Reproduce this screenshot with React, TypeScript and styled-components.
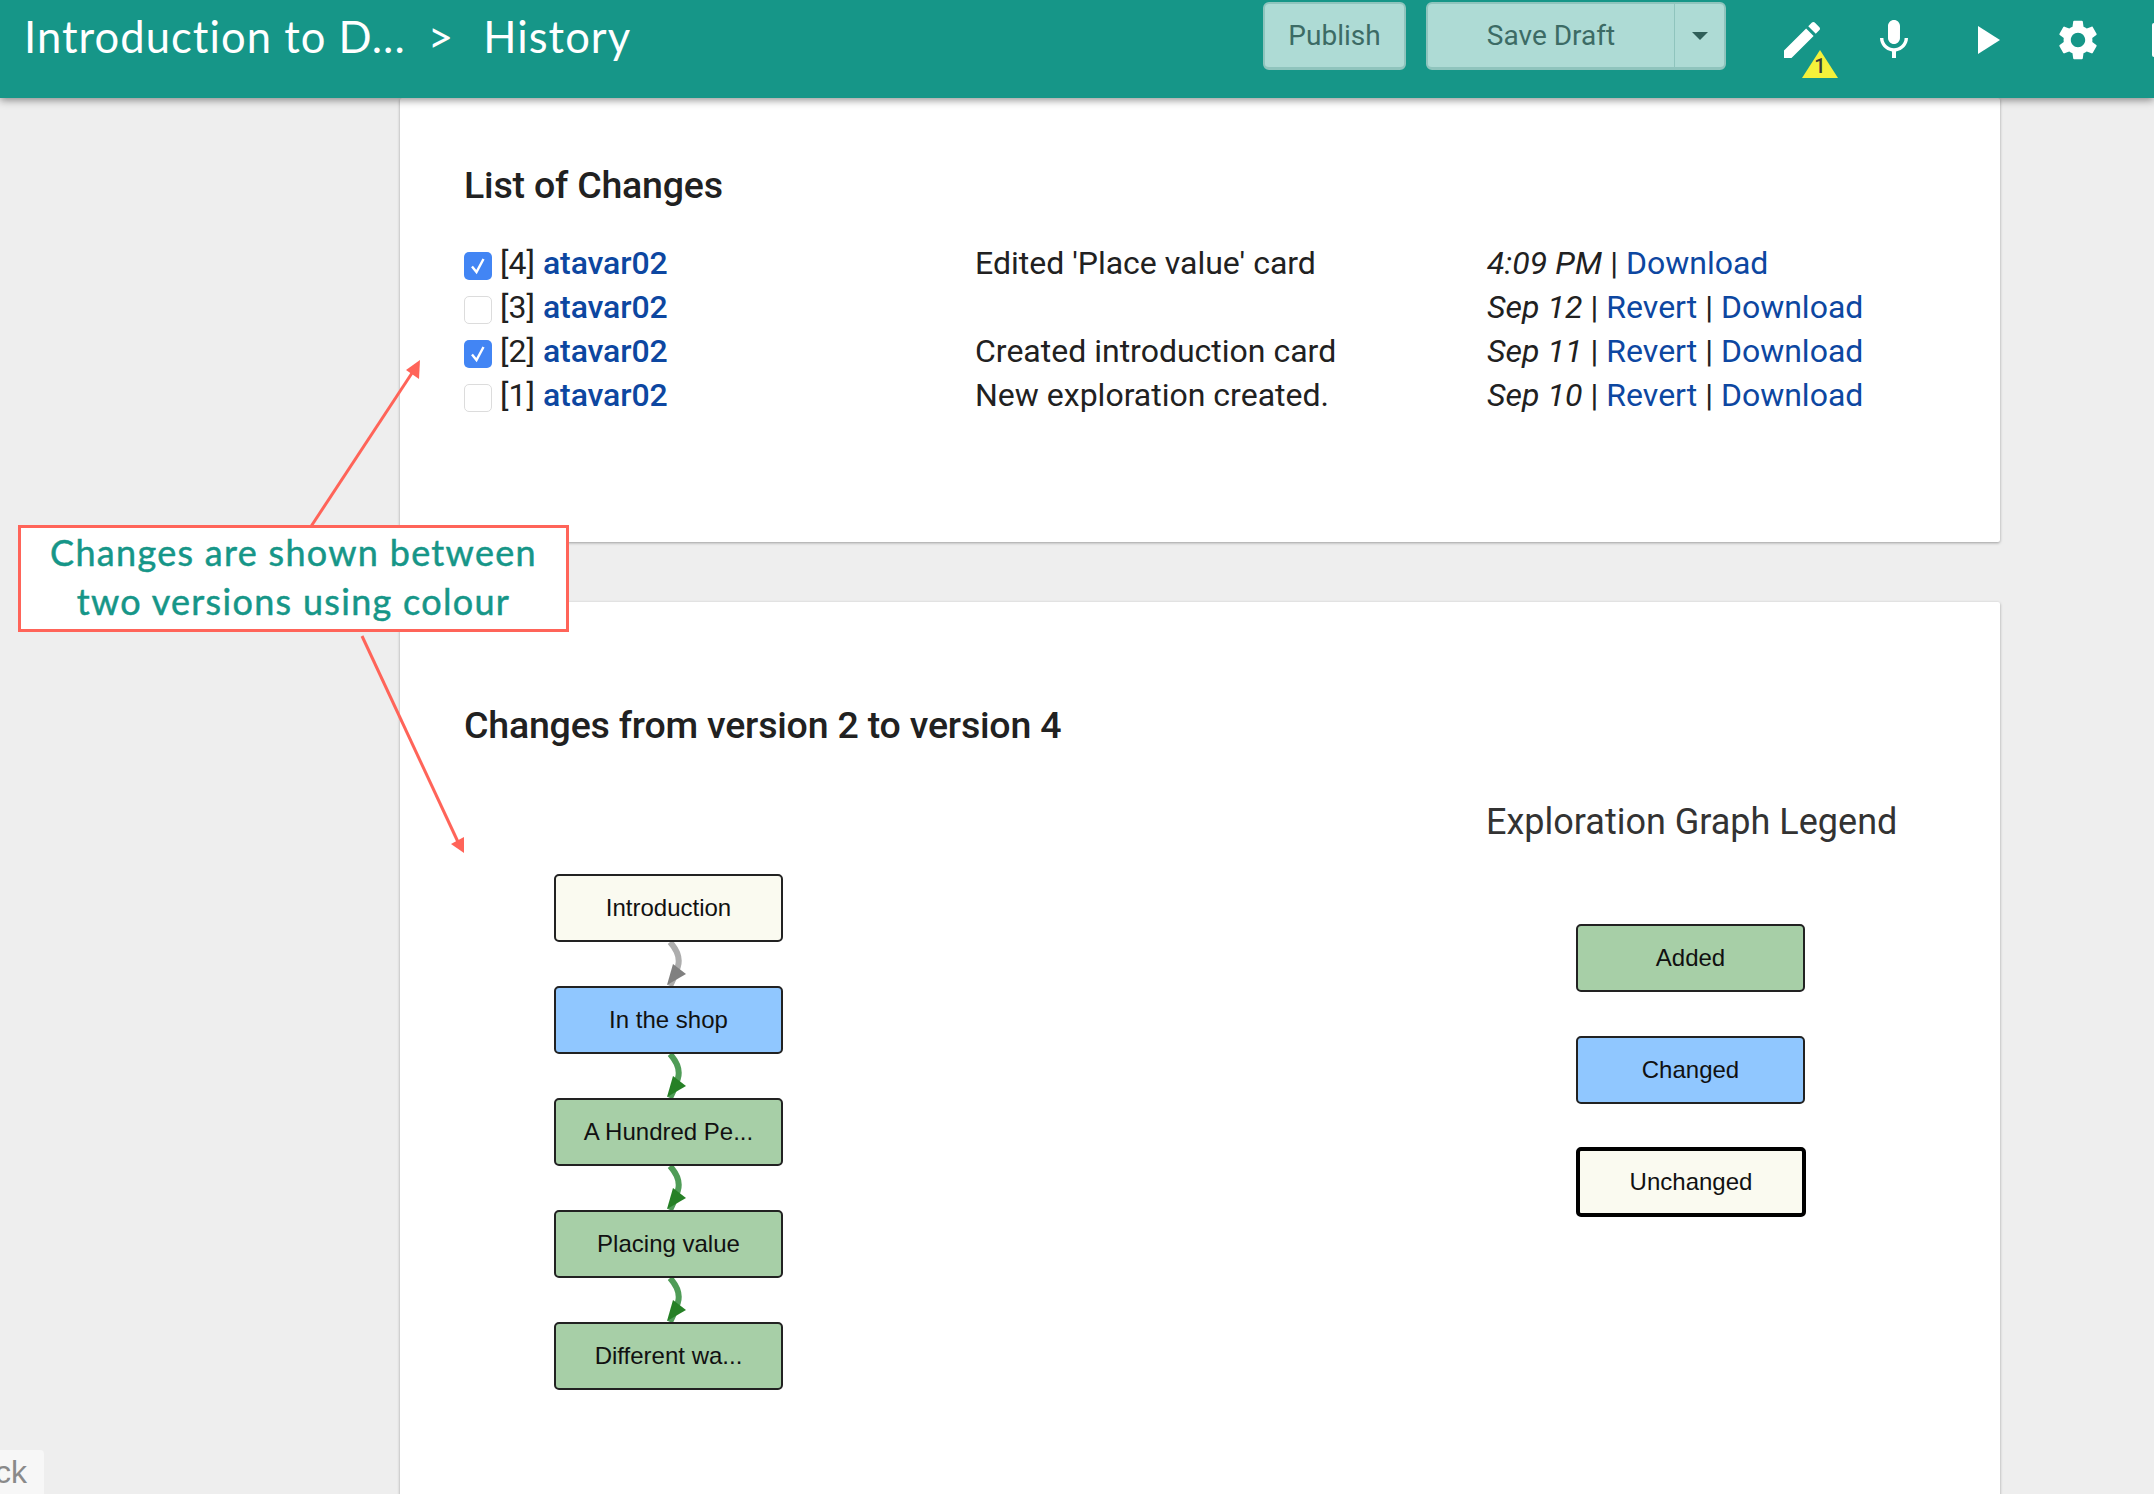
import React from "react";
import styled, { createGlobalStyle } from "styled-components";

const Global = createGlobalStyle`
  html, body { margin: 0; padding: 0; background: #eeeeee; }
  body { font-family: Roboto, "Liberation Sans", sans-serif; color: #212121; }
  * { box-sizing: border-box; }
`;

const Page = styled.div`
  position: relative;
  width: 2154px;
  height: 1494px;
  overflow: hidden;
  background: #eeeeee;
`;

const NavBar = styled.header`
  position: relative;
  z-index: 2;
  display: flex;
  align-items: flex-start;
  height: 98px;
  background: #169688;
  box-shadow: 0 2px 8px rgba(0, 0, 0, 0.45);
  overflow: hidden;
`;

const Crumbs = styled.div`
  display: flex;
  align-items: center;
  height: 72px;
  padding-left: 24px;
  font-family: Lato, "Open Sans", sans-serif;
  font-size: 43.5px;
  letter-spacing: 1.05px;
  color: #ffffff;
  white-space: pre;
`;

const CrumbSep = styled.span`
  margin: 0 29px 0 22px;
  font-size: 44px;
`;

const NavRight = styled.div`
  display: flex;
  align-items: flex-start;
  margin-left: auto;
  margin-right: -40px;
`;

const NavButton = styled.div`
  display: flex;
  align-items: center;
  justify-content: center;
  height: 68px;
  margin-top: 2px;
  background: #aedbd5;
  border: 2px solid #8fc4bd;
  border-bottom-width: 3px;
  border-radius: 6px;
  font-size: 28px;
  color: #3c6b65;
`;

const PublishButton = styled(NavButton)`
  width: 143px;
  margin-right: 20px;
`;

const SaveButton = styled(NavButton)`
  width: 300px;
  margin-right: 52px;
  justify-content: flex-start;
`;

const SaveLabel = styled.span`
  flex: 1;
  text-align: center;
`;

const Caret = styled.span`
  display: flex;
  align-items: center;
  justify-content: center;
  width: 50px;
  height: 100%;
  border-left: 1px solid #8fc4bd;

  &::after {
    content: "";
    border-left: 8px solid transparent;
    border-right: 8px solid transparent;
    border-top: 8px solid #2f5f59;
  }
`;

const IconRow = styled.div`
  display: flex;
  gap: 44px;
  padding-top: 16px;
`;

const IconSlot = styled.div`
  position: relative;
  width: 48px;
  height: 48px;
  color: #ffffff;

  svg { display: block; }
`;

const WarningBadge = styled.div`
  position: absolute;
  left: 24px;
  top: 34px;
  width: 36px;
  height: 28px;
  display: flex;
  align-items: flex-end;
  justify-content: center;
  clip-path: polygon(50% 0, 100% 100%, 0 100%);
  background: #f4f13b;
  font-size: 20px;
  font-weight: 500;
  line-height: 24px;
  color: #3a3a3a;
`;

const Main = styled.main`
  display: flex;
  flex-direction: column;
  gap: 60px;
  width: 1600px;
  margin-left: 400px;
`;

const Card = styled.section`
  background: #ffffff;
  box-shadow: 0 1px 3px rgba(0, 0, 0, 0.35);
  border-radius: 2px;
  padding-left: 64px;
`;

const ChangesCard = styled(Card)`
  height: 444px;
  padding-top: 65px;
`;

const GraphCard = styled(Card)`
  height: 900px;
  padding-top: 101px;
`;

const Heading = styled.h2`
  margin: 0;
  font-size: 37.5px;
  font-weight: 500;
  line-height: 44px;
  letter-spacing: -0.2px;
  color: #212121;
`;

const ChangeList = styled.div`
  margin-top: 34px;
`;

const ChangeRow = styled.div`
  display: grid;
  grid-template-columns: 511px 512px 1fr;
  height: 44px;
  align-items: center;
  font-size: 32px;
  line-height: 44px;
  white-space: nowrap;
`;

const Who = styled.div`
  display: flex;
  align-items: center;
`;

const Check = styled.span<{ $on: boolean }>`
  display: flex;
  align-items: center;
  justify-content: center;
  width: 28px;
  height: 28px;
  margin: 5px 8px 0 0;
  border-radius: 5px;
  background: ${(p) => (p.$on ? "#4285f4" : "#ffffff")};
  border: ${(p) => (p.$on ? "none" : "1px solid #dcdcdc")};
`;

const UserLink = styled.a`
  margin-left: 8px;
  font-weight: 500;
  letter-spacing: -0.1px;
  color: #0d47a1;
`;

const When = styled.em`
  font-style: italic;
  letter-spacing: 0.1px;
`;

const Action = styled.a`
  color: #0d47a1;
`;

const GraphBody = styled.div`
  display: grid;
  grid-template-columns: 1022px 1fr;
`;

const GraphColumn = styled.div`
  padding: 127px 0 0 90px;
`;

const FlowNode = styled.div<{ $fill: string; $heavy?: boolean }>`
  display: flex;
  align-items: center;
  justify-content: center;
  width: ${(p) => (p.$heavy ? "230px" : "229px")};
  height: ${(p) => (p.$heavy ? "70px" : "68px")};
  margin-top: ${(p) => (p.$heavy ? "-1px" : "0")};
  background: ${(p) => p.$fill};
  border: ${(p) => (p.$heavy ? "4px" : "2px")} solid ${(p) => (p.$heavy ? "#000" : "#222")};
  border-radius: 5px;
  font-family: "Liberation Sans", Arial, sans-serif;
  font-size: 24px;
  color: #111111;
`;

const EdgeSvg = styled.svg`
  display: block;
  margin-left: 85px;
`;

const LegendColumn = styled.div`
  padding-top: 53px;
`;

const LegendTitle = styled.h3`
  margin: 0 0 80px;
  font-size: 36px;
  font-weight: 400;
  line-height: 44px;
  color: #333333;
`;

const LegendList = styled.div`
  display: flex;
  flex-direction: column;
  align-items: flex-start;
  gap: 44px;
  padding-left: 90px;
`;

const ArrowLayer = styled.svg`
  position: absolute;
  inset: 0;
  z-index: 3;
  pointer-events: none;
`;

const Callout = styled.div`
  position: absolute;
  z-index: 4;
  left: 18px;
  top: 525px;
  width: 551px;
  height: 107px;
  background: #ffffff;
  border: 3px solid #ff6459;
  font-family: Lato, "Open Sans", sans-serif;
  font-size: 36px;
  font-weight: 400;
  -webkit-text-stroke: 0.5px #169688;
  line-height: 49px;
  letter-spacing: 1.3px;
  text-align: center;
  color: #169688;
`;

const FeedbackTab = styled.div`
  position: absolute;
  z-index: 2;
  left: 0;
  bottom: 0;
  width: 44px;
  height: 44px;
  overflow: hidden;
  background: #f7f7f7;
  border-top-right-radius: 4px;
  font-family: "Liberation Sans", Arial, sans-serif;
  font-size: 32px;
  line-height: 44px;
  color: #8a8a8a;
  direction: rtl;
  padding-right: 17px;
  white-space: nowrap;
`;

const CheckMark = () => (
  <svg width="20" height="22" viewBox="0 0 20 22">
    <path d="M4 11.5 L8.5 17 L15.5 4" fill="none" stroke="#fff" strokeWidth="2.4" />
  </svg>
);

const Edge = ({ line, head }: { line: string; head: string }) => (
  <EdgeSvg width="60" height="44" viewBox="0 0 60 44">
    <path d="M31 0 C39 9 41 17 39 24 C37 32 34 38 31 44" fill="none" stroke={line} strokeWidth="6" />
    <polygon points="47,32 34,22 28,43" fill={head} />
  </EdgeSvg>
);

const changes = [
  { n: 4, on: true, note: "Edited 'Place value' card", when: "4:09 PM", revert: false },
  { n: 3, on: false, note: "", when: "Sep 12", revert: true },
  { n: 2, on: true, note: "Created introduction card", when: "Sep 11", revert: true },
  { n: 1, on: false, note: "New exploration created.", when: "Sep 10", revert: true },
];

const BEIGE = "#fafaf0";
const BLUE = "#90c7ff";
const GREEN = "#a7cfa7";
const GREY_EDGE = { line: "#adadad", head: "#808080" };
const GREEN_EDGE = { line: "#4f9c57", head: "#268026" };

export default function App() {
  return (
    <Page>
      <Global />
      <NavBar>
        <Crumbs>
          Introduction to D...
          <CrumbSep>&gt;</CrumbSep>
          History
        </Crumbs>
        <NavRight>
          <PublishButton>Publish</PublishButton>
          <SaveButton>
            <SaveLabel>Save Draft</SaveLabel>
            <Caret />
          </SaveButton>
          <IconRow>
            <IconSlot>
              <svg width="48" height="48" viewBox="0 0 24 24" fill="currentColor">
                <path d="M3 17.25V21h3.75L17.81 9.94l-3.75-3.75L3 17.25zM20.71 7.04c.39-.39.39-1.02 0-1.41l-2.34-2.34c-.39-.39-1.02-.39-1.41 0l-1.83 1.83 3.75 3.75 1.83-1.83z" />
              </svg>
              <WarningBadge>1</WarningBadge>
            </IconSlot>
            <IconSlot>
              <svg width="48" height="48" viewBox="0 0 24 24" fill="currentColor">
                <path d="M12 14c1.66 0 2.99-1.34 2.99-3L15 5c0-1.66-1.34-3-3-3S9 3.34 9 5v6c0 1.66 1.34 3 3 3zm5.3-3c0 3-2.54 5.1-5.3 5.1S6.7 14 6.7 11H5c0 3.41 2.72 6.23 6 6.72V21h2v-3.28c3.28-.48 6-3.3 6-6.72h-1.7z" />
              </svg>
            </IconSlot>
            <IconSlot>
              <svg width="48" height="48" viewBox="0 0 24 24" fill="currentColor">
                <path d="M8 5v14l11-7z" />
              </svg>
            </IconSlot>
            <IconSlot>
              <svg width="48" height="48" viewBox="0 0 24 24" fill="currentColor">
                <path d="M19.14 12.94c.04-.3.06-.61.06-.94 0-.32-.02-.64-.07-.94l2.03-1.58c.18-.14.23-.41.12-.61l-1.92-3.32c-.12-.22-.37-.29-.59-.22l-2.39.96c-.5-.38-1.03-.7-1.62-.94l-.36-2.54c-.04-.24-.24-.41-.48-.41h-3.84c-.24 0-.43.17-.47.41l-.36 2.54c-.59.24-1.13.57-1.62.94l-2.39-.96c-.22-.08-.47 0-.59.22L2.74 8.87c-.12.21-.08.47.12.61l2.03 1.58c-.05.3-.09.63-.09.94s.02.64.07.94l-2.03 1.58c-.18.14-.23.41-.12.61l1.92 3.32c.12.22.37.29.59.22l2.39-.96c.5.38 1.03.7 1.62.94l.36 2.54c.05.24.24.41.48.41h3.84c.24 0 .44-.17.47-.41l.36-2.54c.59-.24 1.13-.56 1.62-.94l2.39.96c.22.08.47 0 .59-.22l1.92-3.32c.12-.22.07-.47-.12-.61l-2.01-1.58zM12 15.6c-1.98 0-3.6-1.62-3.6-3.6s1.62-3.6 3.6-3.6 3.6 1.62 3.6 3.6-1.62 3.6-3.6 3.6z" />
              </svg>
            </IconSlot>
            <IconSlot>
              <svg width="48" height="48" viewBox="0 0 24 24" fill="currentColor">
                <rect x="3" y="3.5" width="18" height="17" rx="1" />
              </svg>
            </IconSlot>
          </IconRow>
        </NavRight>
      </NavBar>

      <Main>
        <ChangesCard>
          <Heading>List of Changes</Heading>
          <ChangeList>
            {changes.map((c) => (
              <ChangeRow key={c.n}>
                <Who>
                  <Check $on={c.on}>{c.on && <CheckMark />}</Check>[{c.n}]
                  <UserLink>atavar02</UserLink>
                </Who>
                <div>{c.note}</div>
                <div>
                  <When>{c.when}</When> |{" "}
                  {c.revert && (
                    <>
                      <Action>Revert</Action> |{" "}
                    </>
                  )}
                  <Action>Download</Action>
                </div>
              </ChangeRow>
            ))}
          </ChangeList>
        </ChangesCard>

        <GraphCard>
          <Heading>Changes from version 2 to version 4</Heading>
          <GraphBody>
            <GraphColumn>
              <FlowNode $fill={BEIGE}>Introduction</FlowNode>
              <Edge {...GREY_EDGE} />
              <FlowNode $fill={BLUE}>In the shop</FlowNode>
              <Edge {...GREEN_EDGE} />
              <FlowNode $fill={GREEN}>A Hundred Pe...</FlowNode>
              <Edge {...GREEN_EDGE} />
              <FlowNode $fill={GREEN}>Placing value</FlowNode>
              <Edge {...GREEN_EDGE} />
              <FlowNode $fill={GREEN}>Different wa...</FlowNode>
            </GraphColumn>
            <LegendColumn>
              <LegendTitle>Exploration Graph Legend</LegendTitle>
              <LegendList>
                <FlowNode $fill={GREEN}>Added</FlowNode>
                <FlowNode $fill={BLUE}>Changed</FlowNode>
                <FlowNode $fill={BEIGE} $heavy>
                  Unchanged
                </FlowNode>
              </LegendList>
            </LegendColumn>
          </GraphBody>
        </GraphCard>
      </Main>

      <ArrowLayer width="2154" height="1494" viewBox="0 0 2154 1494">
        <line x1="310" y1="528" x2="414" y2="370" stroke="#ff6459" strokeWidth="3" />
        <polygon points="420,360 419,379 406,370" fill="#ff6459" />
        <line x1="362" y1="636" x2="458" y2="842" stroke="#ff6459" strokeWidth="3" />
        <polygon points="464,853 451,844 464,837" fill="#ff6459" />
      </ArrowLayer>

      <Callout>
        Changes are shown between
        <br />
        two versions using colour
      </Callout>

      <FeedbackTab>ck</FeedbackTab>
    </Page>
  );
}
